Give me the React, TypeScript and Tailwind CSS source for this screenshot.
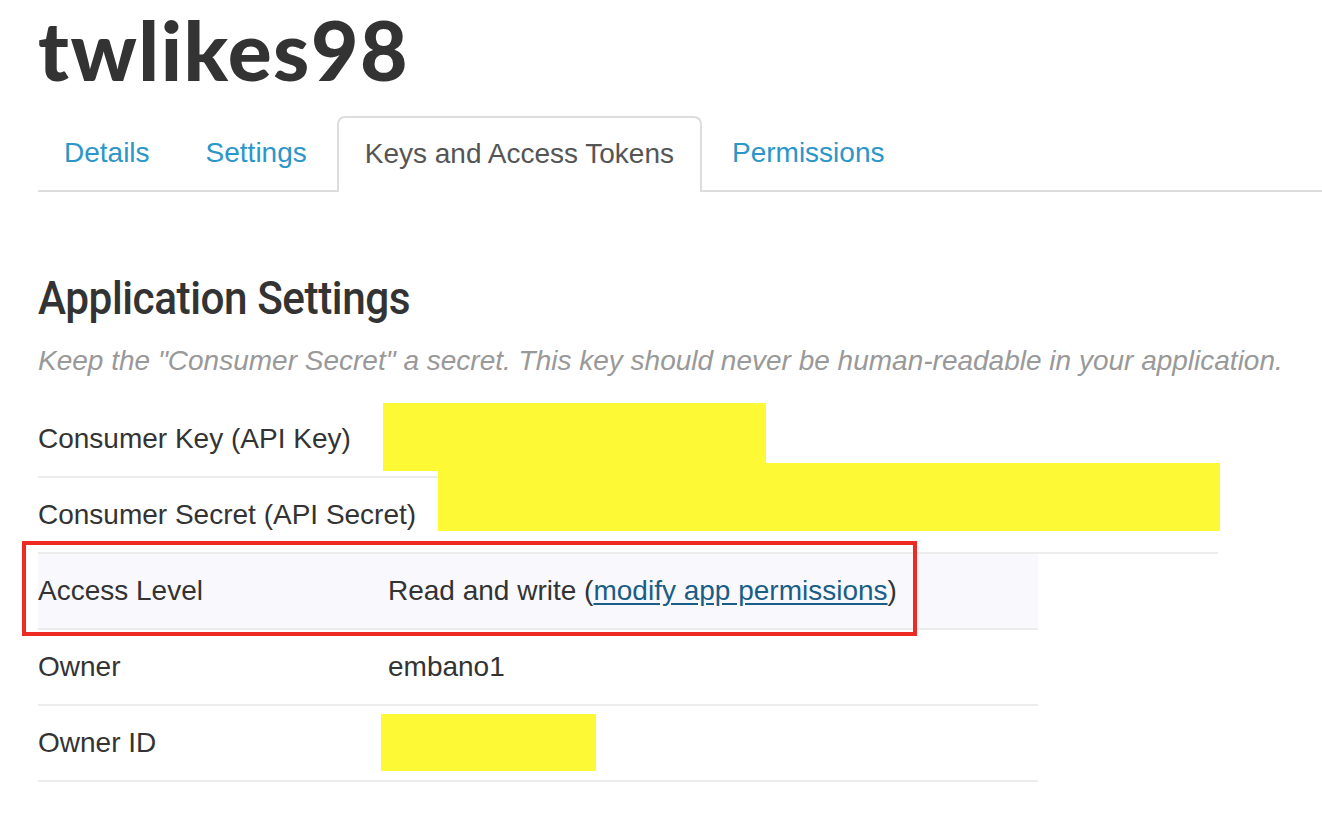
import React from 'react';

const tabs = [
  { label: 'Details', active: false },
  { label: 'Settings', active: false },
  { label: 'Keys and Access Tokens', active: true },
  { label: 'Permissions', active: false },
];

function Row({ label, children, shaded = false }: { label: string; children?: React.ReactNode; shaded?: boolean }) {
  return (
    <div className={`flex items-center h-[76px] border-b-2 border-[#ececec] ${shaded ? 'bg-[#f9f9fd]' : ''}`}>
      <div className="w-[350px] shrink-0 whitespace-nowrap">{label}</div>
      <div className="flex-1 whitespace-nowrap">{children}</div>
    </div>
  );
}

export default function App() {
  return (
    <div className="flex min-h-screen flex-col bg-white pl-[38px] text-[#333] font-['Liberation_Sans',Arial,sans-serif]">
      <h1 className="text-[82px] leading-[99px] tracking-[1.5px] font-black font-['Lato',sans-serif] text-[#333]">
        twlikes98
      </h1>

      {/* Tabs */}
      <div className="mt-[17px] flex border-b-2 border-[#ddd]">
        {tabs.map((t) =>
          t.active ? (
            <div
              key={t.label}
              className="-mb-[2px] mr-[4px] flex h-[76px] items-center rounded-t-[8px] border-2 border-b-0 border-[#ddd] bg-white px-[26px] pb-[2px] text-[28px] text-[#555]"
            >
              {t.label}
            </div>
          ) : (
            <div key={t.label} className="mr-[4px] flex h-[74px] items-center px-[26px] text-[28px] text-[#2b96c9]">
              {t.label}
            </div>
          )
        )}
      </div>

      <h2 className="mt-[79px] h-[54px] text-[46px] leading-[54px] font-medium text-[#333] font-['Roboto',sans-serif]">
        <span className="inline-block origin-left scale-x-[0.92] tracking-[-0.5px]">Application Settings</span>
      </h2>
      <p className="mt-[16px] text-[28px] leading-[40px] italic text-[#999]">
        Keep the "Consumer Secret" a secret. This key should never be human-readable in your application.
      </p>

      <div className="relative mt-[21px] text-[28px]">
        <div className="w-[1180px]">
          <Row label="Consumer Key (API Key)" />
          <Row label="Consumer Secret (API Secret)" />
        </div>
        <div className="w-[1000px]">
          <Row label="Access Level" shaded>
            Read and write (
            <a href="#" className="text-[#1a5e88] underline underline-offset-[3px]">
              modify app permissions
            </a>
            )
          </Row>
          <Row label="Owner">embano1</Row>
          <Row label="Owner ID" />
        </div>

        {/* redaction marks and annotation */}
        <div className="absolute left-[345px] top-[1px] h-[68px] w-[383px] bg-[#fef935]" />
        <div className="absolute left-[400px] top-[61px] h-[68px] w-[782px] bg-[#fef935]" />
        <div className="absolute left-[343px] top-[312px] h-[57px] w-[215px] bg-[#fef935]" />
        <div className="absolute left-[-16px] top-[139px] h-[95px] w-[895px] border-4 border-[#ee2b22]" />
      </div>
    </div>
  );
}
